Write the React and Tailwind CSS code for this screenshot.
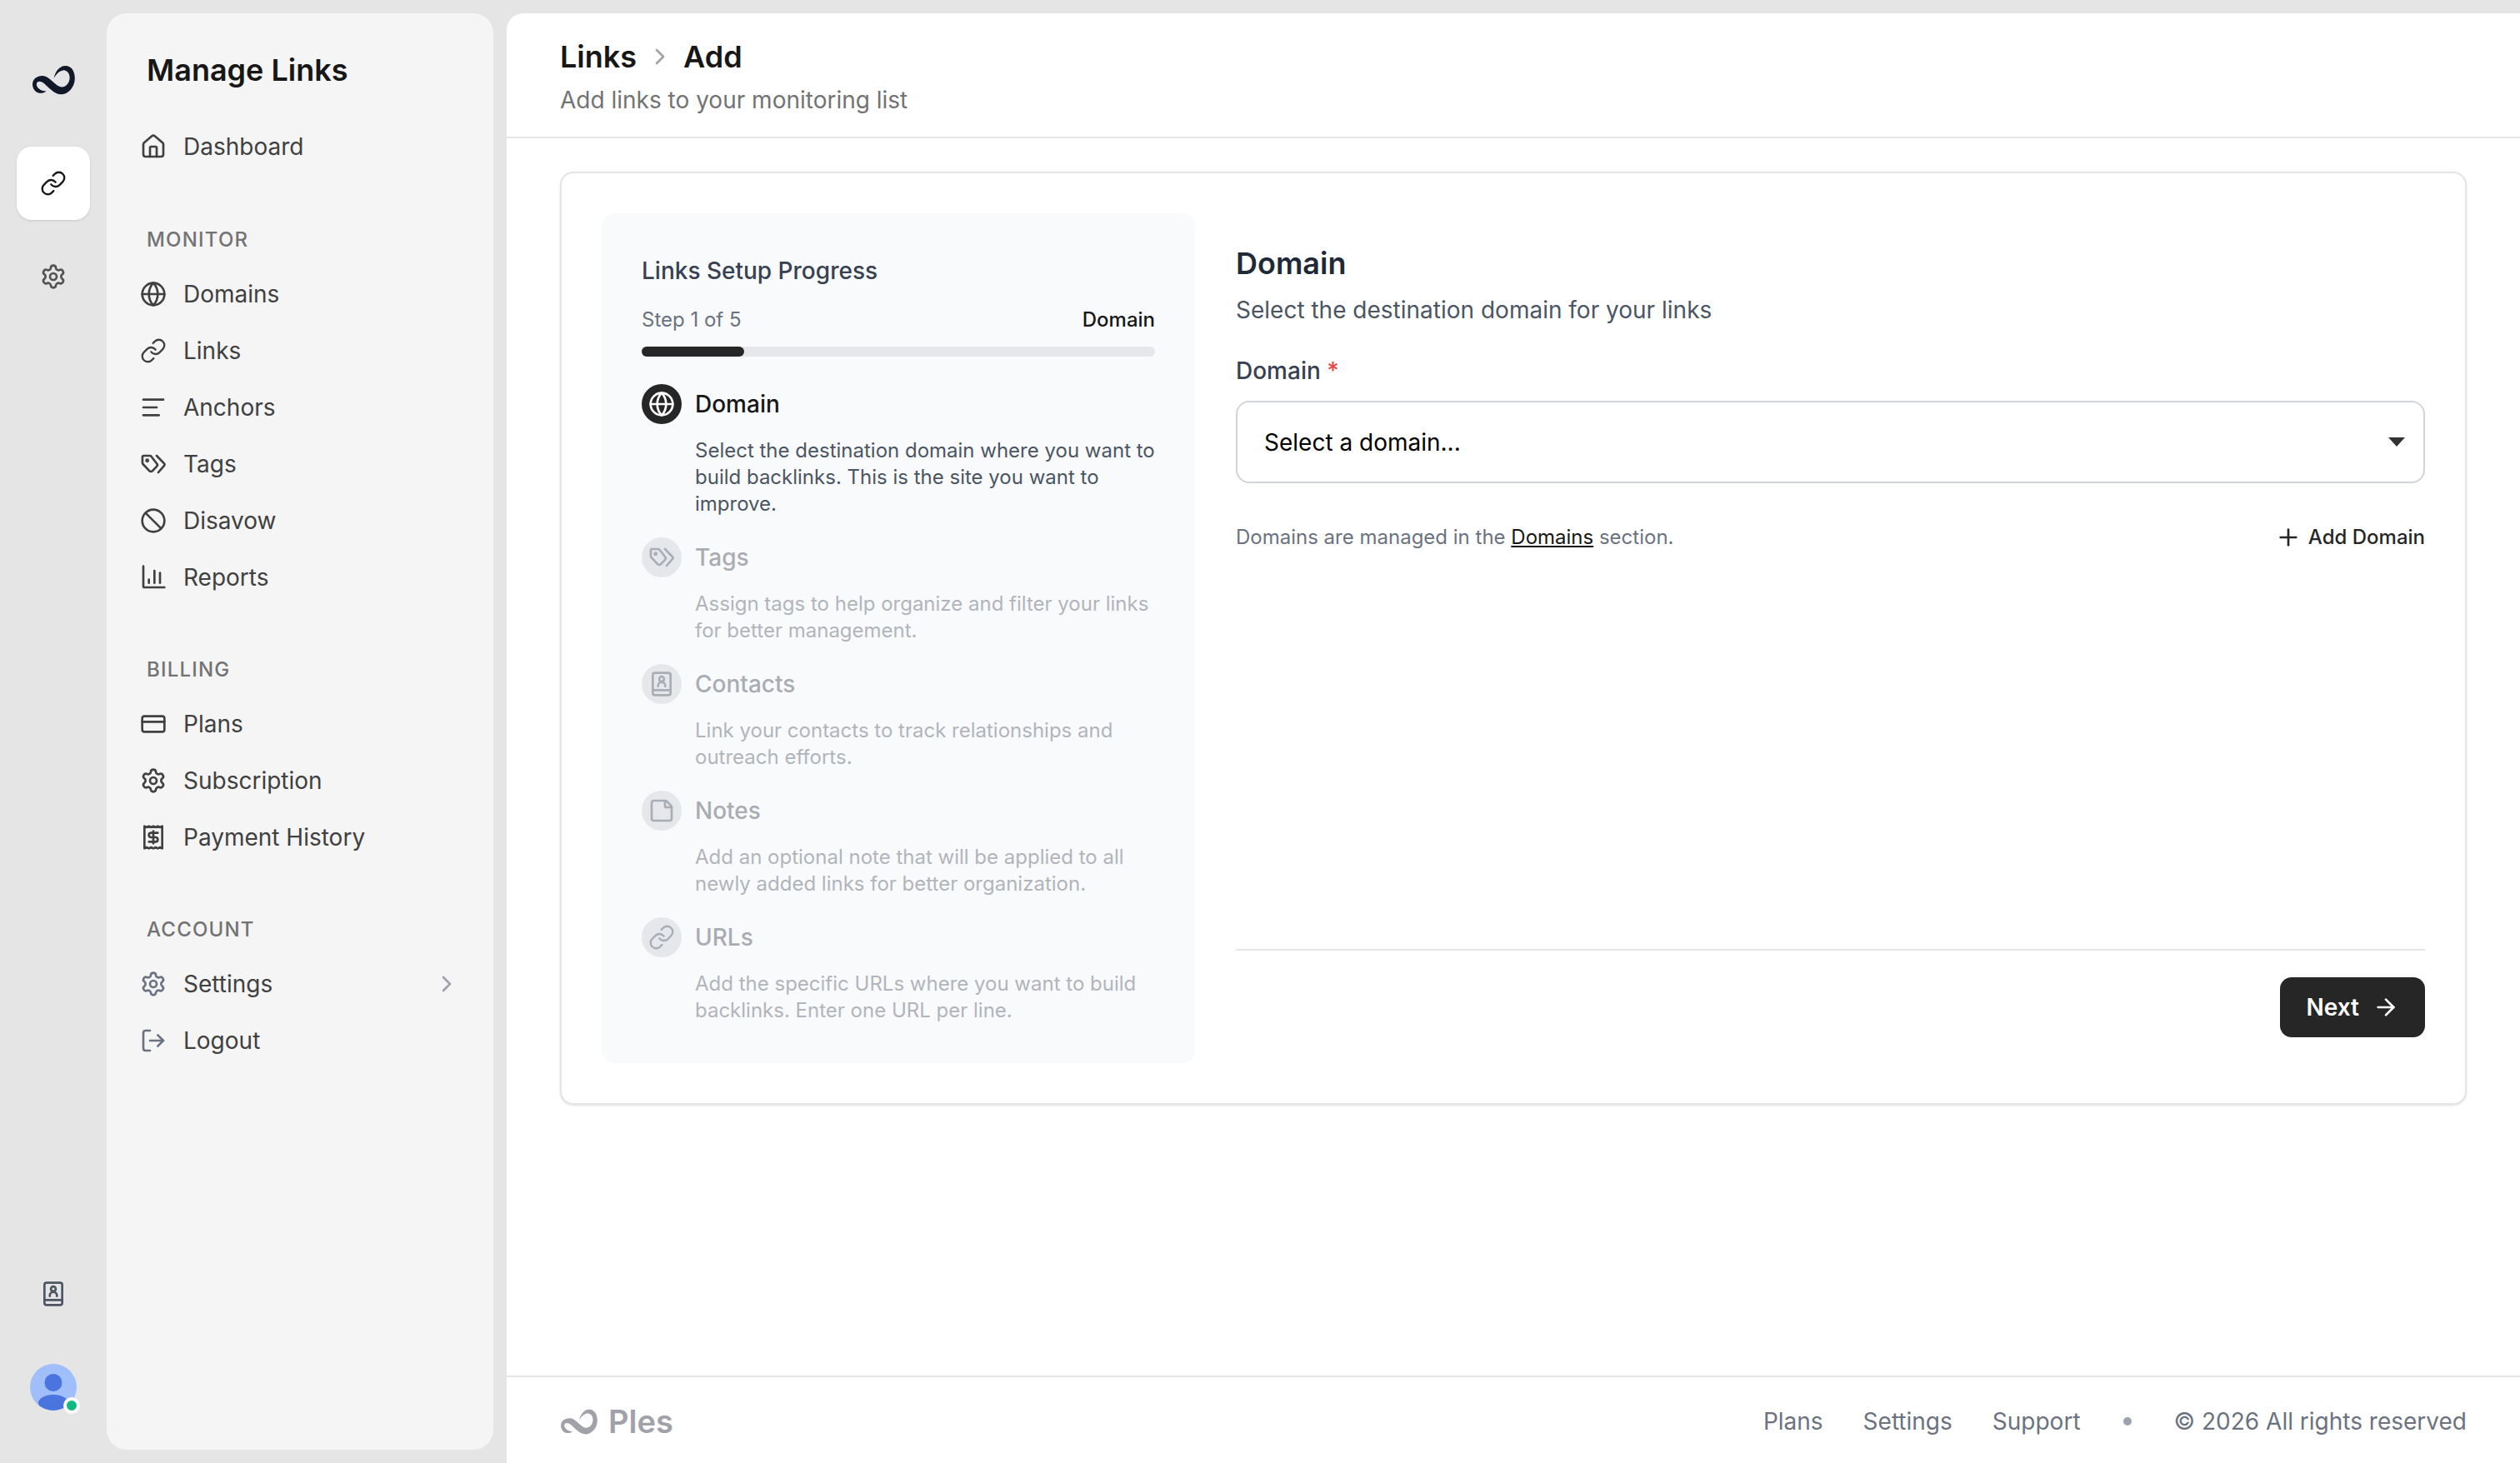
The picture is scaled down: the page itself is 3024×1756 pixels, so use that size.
import { House, Globe, Link, AlignLeft, Ban, CreditCard, Settings, Receipt, ChevronRight, LogOut, StickyNote, Plus, ArrowRight } from "lucide-react";

// Ples swirl, traced from the logo
function Logo({ className }) {
  return (
    <svg viewBox="115 110 165 112" className={className} fill="currentColor">
      <path d="M170 208C150 222 125 215 119 190C114 165 135 148 160 151C180 153 195 178 218 190C235 198 255 185 257 160C258 140 245 128 232 130C218 132 205 145 198 160C202 135 220 112 242 113C265 114 278 135 276 165C274 195 250 220 225 220C200 220 180 195 160 178C150 170 138 168 134 178C130 190 145 208 170 208Z" />
    </svg>
  );
}

function ChainLink({ className }) {
  return <Link className={className} strokeWidth={1.75} />;
}

function TagPair({ className }) {
  return (
    <svg viewBox="0 0 24 24" className={className} fill="none" stroke="currentColor" strokeWidth="2" strokeLinecap="round" strokeLinejoin="round">
      <path d="M9 4.5H3.2a1 1 0 0 0-1 1v5.3a2 2 0 0 0 .6 1.4l5.6 5.9a2 2 0 0 0 2.9 0l3.7-3.9a2 2 0 0 0 0-2.8L9.9 4.9a1.4 1.4 0 0 0-.9-.4Z" />
      <path d="M15 4.5l6.6 6.9a1.6 1.6 0 0 1 0 2.2L16.5 19.5" />
      <circle cx="6.5" cy="8.8" r="0.8" />
    </svg>
  );
}

function ContactBook({ className }) {
  return (
    <svg viewBox="0 0 24 24" className={className} fill="none" stroke="currentColor" strokeWidth="2" strokeLinecap="round" strokeLinejoin="round">
      <rect x="4" y="2" width="16" height="20" rx="2" />
      <path d="M4 17.5h16" />
      <circle cx="12" cy="7.5" r="2.2" />
      <path d="M8.8 14v-.6a3.2 3.2 0 0 1 6.4 0v.6" />
    </svg>
  );
}

function ChartAxes({ className }) {
  return (
    <svg viewBox="0 0 24 24" className={className} fill="none" stroke="currentColor" strokeWidth="2" strokeLinecap="round" strokeLinejoin="round">
      <path d="M3 2v18a1 1 0 0 0 1 1h18" />
      <path d="M8 17v-3" />
      <path d="M13 17V6" />
      <path d="M18 17V8" />
    </svg>
  );
}

const sections = [
  {
    label: "MONITOR",
    top: "mt-[62px]",
    items: [
      { name: "Domains", icon: Globe },
      { name: "Links", icon: ChainLink },
      { name: "Anchors", icon: AlignLeft },
      { name: "Tags", icon: TagPair },
      { name: "Disavow", icon: Ban },
      { name: "Reports", icon: ChartAxes },
    ],
  },
  {
    label: "BILLING",
    top: "mt-[61px]",
    items: [
      { name: "Plans", icon: CreditCard },
      { name: "Subscription", icon: Settings },
      { name: "Payment History", icon: Receipt },
    ],
  },
  {
    label: "ACCOUNT",
    top: "mt-[61px]",
    items: [
      { name: "Settings", icon: Settings, muted: true, chevron: true },
      { name: "Logout", icon: LogOut, muted: true },
    ],
  },
];

const steps = [
  { name: "Domain", icon: Globe, active: true, text: "Select the destination domain where you want to build backlinks. This is the site you want to improve." },
  { name: "Tags", icon: TagPair, text: "Assign tags to help organize and filter your links for better management." },
  { name: "Contacts", icon: ContactBook, text: "Link your contacts to track relationships and outreach efforts." },
  { name: "Notes", icon: StickyNote, text: "Add an optional note that will be applied to all newly added links for better organization." },
  { name: "URLs", icon: ChainLink, text: "Add the specific URLs where you want to build backlinks. Enter one URL per line." },
];

function NavRow({ item }) {
  const Icon = item.icon;
  return (
    <div className="flex h-[68px] items-center gap-[20px] text-[#404040]">
      <Icon className={item.muted ? "size-[32px] text-[#6b7280]" : "size-[32px] text-[#404040]"} />
      <span className="flex-1 text-[28px] leading-[40px]">{item.name}</span>
      {item.chevron && <ChevronRight className="size-[32px] text-[#9ca3af]" />}
    </div>
  );
}

function Rail() {
  return (
    <aside className="flex w-[128px] shrink-0 flex-col items-center pt-[78px] pb-[63px]">
      <Logo className="h-[36px] w-[53px] text-[#111827]" />
      <div className="mt-[62px] flex size-[88px] items-center justify-center rounded-[18px] bg-white shadow-sm">
        <ChainLink className="size-[32px] text-[#171717]" />
      </div>
      <Settings className="mt-[52px] size-[32px] text-[#525252]" />
      <div className="flex-1" />
      <ContactBook className="size-[32px] text-[#4b5563]" />
      <div className="relative mt-[68px] size-[56px]">
        <svg viewBox="0 0 56 56" className="size-[56px]">
          <clipPath id="avatar-clip">
            <circle cx="28" cy="28" r="28" />
          </clipPath>
          <circle cx="28" cy="28" r="28" fill="#a0bffa" />
          <circle cx="28" cy="22.5" r="10.5" fill="#4a74de" />
          <ellipse cx="28" cy="47" rx="18" ry="10" fill="#4a74de" clipPath="url(#avatar-clip)" />
        </svg>
        <span className="absolute -right-[4px] bottom-[-4px] size-[20px] rounded-full border-[4px] border-white bg-[#10b981]" />
      </div>
    </aside>
  );
}

function Sidebar() {
  return (
    <aside className="my-[16px] w-[464px] shrink-0 rounded-[24px] bg-[#f5f5f5] px-[40px] pt-[44px]">
      <h1 className="ml-[8px] text-[36px] leading-[48px] font-semibold text-[#171717]">Manage Links</h1>
      <div className="mt-[34px]">
        <NavRow item={{ name: "Dashboard", icon: House }} />
      </div>
      {sections.map((section) => (
        <div key={section.label} className={section.top}>
          <div className="mb-[15px] ml-[8px] h-[32px] text-[24px] leading-[32px] font-medium tracking-[1.2px] text-[#737373]">{section.label}</div>
          {section.items.map((item) => (
            <NavRow key={item.name} item={item} />
          ))}
        </div>
      ))}
    </aside>
  );
}

function Step({ step }) {
  const Icon = step.icon;
  return (
    <div>
      <div className="flex items-center gap-[16px]">
        <div className={step.active ? "flex size-[48px] items-center justify-center rounded-full bg-[#262626] text-white" : "flex size-[48px] items-center justify-center rounded-full bg-[#e5e7eb] text-[#a9adb5]"}>
          <Icon className="size-[32px]" />
        </div>
        <span className={step.active ? "text-[28px] font-medium text-[#171717]" : "text-[28px] font-medium text-[#a9adb3]"}>{step.name}</span>
      </div>
      <p className={step.active ? "mt-[16px] ml-[64px] text-[24px] leading-[32px] text-[#4b5563]" : "mt-[16px] ml-[64px] text-[24px] leading-[32px] text-[#b1b5bb]"}>{step.text}</p>
    </div>
  );
}

function ProgressPanel() {
  const percent = 20;
  return (
    <div className="w-[712px] shrink-0 rounded-[16px] bg-[#f9fafb] px-[48px] pt-[49px] pb-[47px]">
      <div className="text-[28px] leading-[40px] font-medium text-[#374151]">Links Setup Progress</div>
      <div className="mt-[23px] flex items-center justify-between text-[24px] leading-[32px]">
        <span className="text-[#6b7280]">Step 1 of 5</span>
        <span className="font-medium text-[#171717]">Domain</span>
      </div>
      <div className="mt-[16px] h-[12px] rounded-full bg-[#e5e7eb]">
        <div className="h-[12px] rounded-full bg-[#262626]" style={{ width: `${percent}%` }} />
      </div>
      <div className="mt-[33px] flex flex-col gap-[24px]">
        {steps.map((step) => (
          <Step key={step.name} step={step} />
        ))}
      </div>
    </div>
  );
}

function DomainForm() {
  return (
    <div className="flex flex-1 flex-col pt-[36px] pb-[31px]">
      <h2 className="text-[36px] leading-[48px] font-semibold text-[#1f2937]">Domain</h2>
      <p className="mt-[12px] text-[28px] leading-[40px] text-[#4b5563]">Select the destination domain for your links</p>
      <label className="mt-[33px] text-[28px] leading-[40px] font-medium text-[#374151]">
        Domain <span className="text-[#ef4444]">*</span>
      </label>
      <div className="mt-[16px] flex h-[99px] items-center justify-between rounded-[16px] border-2 border-[#d1d5db] pr-[22px] pl-[32px] text-[28px] text-black">
        <span>Select a domain...</span>
        <svg viewBox="0 0 20 11" className="h-[11px] w-[20px]" fill="#333333">
          <path d="M0 0h20L10 11Z" />
        </svg>
      </div>
      <div className="mt-[49px] flex items-center justify-between text-[24px] leading-[32px]">
        <span className="text-[#6b7280]">
          Domains are managed in the <span className="text-[#171717] underline">Domains</span> section.
        </span>
        <span className="flex items-center gap-[8px] font-medium text-[#262626]">
          <Plus className="size-[32px]" />
          Add Domain
        </span>
      </div>
      <div className="flex-1" />
      <div className="border-t-2 border-[#e5e5e5] pt-[32px]">
        <div className="flex justify-end">
          <button className="flex h-[72px] items-center gap-[16px] rounded-[14px] bg-[#262626] pr-[31px] pl-[32px] text-[28px] font-semibold text-white">
            Next
            <ArrowRight className="size-[32px]" />
          </button>
        </div>
      </div>
    </div>
  );
}

function Footer() {
  return (
    <footer className="mt-auto flex h-[105px] items-center justify-between border-t-2 border-[#e5e5e5] px-[64px] pt-[3px] text-[#6b7280]">
      <div className="flex items-center gap-[12px] text-[#a1a1aa]">
        <Logo className="h-[31px] w-[46px]" />
        <span className="text-[38px] leading-[48px] font-semibold">Ples</span>
      </div>
      <div className="flex items-center gap-[48px] text-[28px] leading-[40px]">
        <span>Plans</span>
        <span>Settings</span>
        <span>Support</span>
        <span className="mx-[3px] size-[10px] rounded-full bg-[#9ca3af]" />
        <span>© 2026 All rights reserved</span>
      </div>
    </footer>
  );
}

export default function App() {
  return (
    <div className="flex h-[1756px] w-[3024px] overflow-hidden bg-[#e5e5e5] font-[Inter,sans-serif]">
      <Rail />
      <Sidebar />
      <main className="mt-[16px] ml-[16px] flex flex-1 flex-col rounded-tl-[20px] bg-white">
        <header className="h-[150px] border-b-2 border-[#e5e5e5] pt-[30px] pl-[64px]">
          <div className="flex items-center gap-[12px] text-[36px] leading-[44px] font-semibold text-[#171717]">
            <span>Links</span>
            <ChevronRight className="size-[32px] text-[#a3a3a3]" />
            <span>Add</span>
          </div>
          <p className="mt-[10px] text-[28px] leading-[40px] text-[#737373]">Add links to your monitoring list</p>
        </header>
        <div className="px-[64px] pt-[40px]">
          <div className="flex gap-[49px] rounded-[16px] border-2 border-[#e5e5e5] bg-white p-[48px] shadow-sm">
            <ProgressPanel />
            <DomainForm />
          </div>
        </div>
        <Footer />
      </main>
    </div>
  );
}
